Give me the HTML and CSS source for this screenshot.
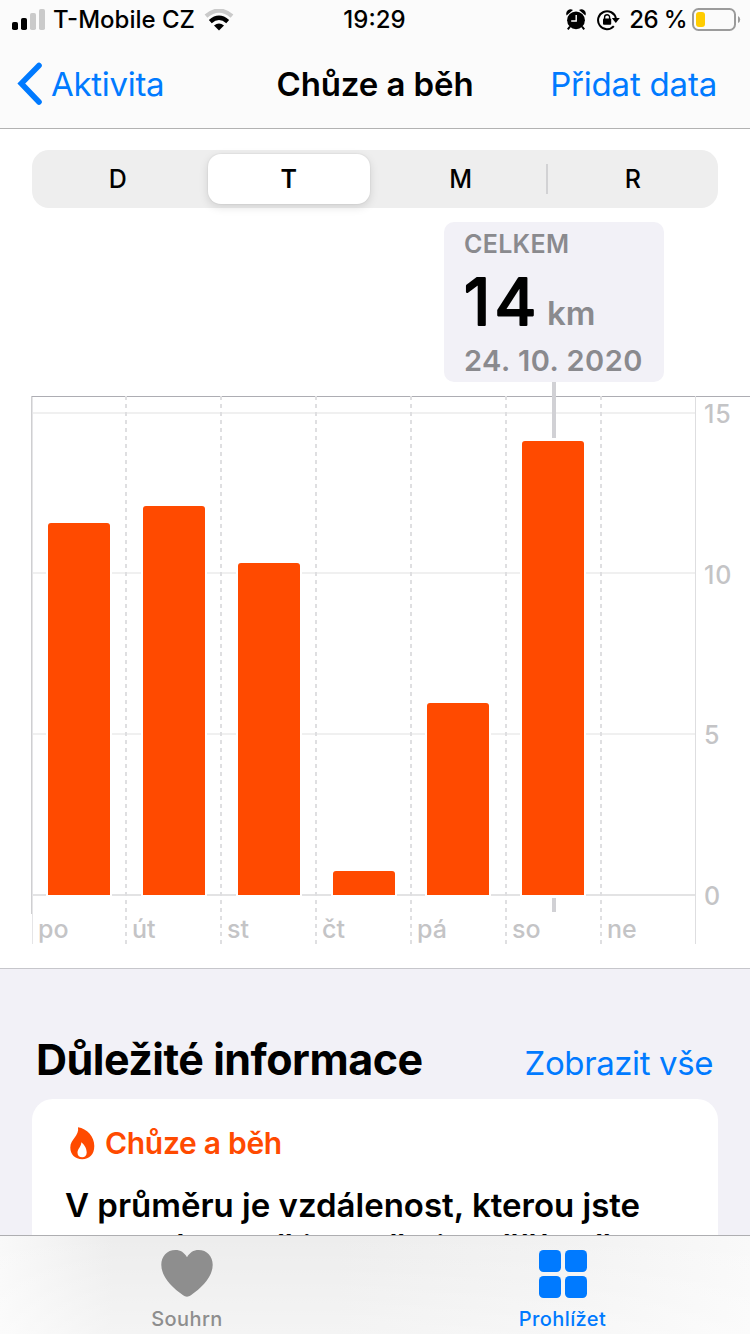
FILE: index.html
```
<!DOCTYPE html>
<html lang="cs">
<head>
    <meta charset="UTF-8">
    <meta name="viewport" content="width=device-width, initial-scale=1.0">
    <title>Chůze a běh</title>
    <link rel="stylesheet" href="styles.css">
</head>
<body>
    <div class="status-bar">
        <div class="status-left">
            <svg width="34" height="22" viewBox="0 0 34 22">
                <rect x="0" y="13" width="6" height="8" rx="1.8"/>
                <rect x="9" y="9" width="6" height="12" rx="1.8"/>
                <rect x="18" y="4" width="6" height="17" rx="1.8" fill="#cacaca"/>
                <rect x="27" y="0" width="6" height="21" rx="1.8" fill="#cacaca"/>
            </svg>
            <span class="carrier">T-Mobile CZ</span>
            <svg class="wifi" width="30" height="22" viewBox="0 0 30 22">
                <path d="M2 7.2 Q15 -4 28 7.2" fill="none" stroke="#cacaca" stroke-width="4.2"/>
                <path d="M6.3 12.6 Q15 5 23.7 12.6" fill="none" stroke="#000" stroke-width="4.4"/>
                <path d="M10 16.6 Q15 12.4 20 16.6 L15 21.6 Z"/>
            </svg>
        </div>
        <div class="clock">19:29</div>
        <div class="status-right">
            <svg width="20" height="22" viewBox="0 0 20 22">
                <circle cx="10" cy="11.3" r="8.9"/>
                <path d="M0.6 6.4 A4.4 4.4 0 0 1 7 1 Z M19.4 6.4 A4.4 4.4 0 0 0 13 1 Z"/>
                <path d="M4 17.5 L1.8 20.4 M16 17.5 L18.2 20.4" stroke="#000" stroke-width="2"/>
                <path d="M10.2 6 V12 H5.2" fill="none" stroke="#fff" stroke-width="1.4"/>
            </svg>
            <svg class="lock" width="23" height="22" viewBox="0 0 23 22">
                <path d="M16.8 17.2 A9 9 0 1 1 18.9 9.5" fill="none" stroke="#000" stroke-width="2"/>
                <path d="M14.8 9 H22.8 L18.8 14 Z"/>
                <rect x="6" y="9.6" width="8.2" height="6.2" rx="1"/>
                <path d="M7.6 10 V8.2 A2.5 2.5 0 0 1 12.6 8.2 V10" fill="none" stroke="#000" stroke-width="1.4"/>
            </svg>
            <span class="percent">26 %</span>
            <svg class="battery" width="49" height="24" viewBox="0 0 49 24">
                <rect x="1" y="1" width="42" height="21" rx="5.5" fill="none" stroke="#9b9b9b" stroke-width="2"/>
                <rect x="4" y="4" width="9" height="15" rx="3" fill="#fc0"/>
                <path d="M46 8 Q48.2 9 48.2 11.5 Q48.2 14 46 15 Z" fill="#9b9b9b"/>
            </svg>
        </div>
    </div>

    <div class="nav-bar">
        <a class="back">
            <svg width="26" height="44" viewBox="0 0 26 44">
                <path d="M22 3.5 L4.3 21.5 L22 40" fill="none" stroke="#007aff" stroke-width="5.6" stroke-linecap="round" stroke-linejoin="miter"/>
            </svg>
            <span class="back-label">Aktivita</span>
        </a>
        <h1>Chůze a běh</h1>
        <a class="add">Přidat data</a>
    </div>

    <main>
        <section class="chart-section">
            <div class="segments">
                <div class="segment">D</div>
                <div class="segment active">T</div>
                <div class="segment">M</div>
                <div class="segment divided">R</div>
            </div>

            <div class="chart">
                <div class="plot">
                    <div class="day"><div class="bar" style="height: 372px"></div><span>po</span></div>
                    <div class="day"><div class="bar" style="height: 389px"></div><span>út</span></div>
                    <div class="day"><div class="bar" style="height: 332px"></div><span>st</span></div>
                    <div class="day"><div class="bar" style="height: 24px"></div><span>čt</span></div>
                    <div class="day"><div class="bar shifted" style="height: 192px"></div><span>pá</span></div>
                    <div class="day"><div class="bar shifted" style="height: 454px"></div><span>so</span></div>
                    <div class="day"><span>ne</span></div>
                </div>
                <div class="scale">
                    <span>15</span>
                    <span>10</span>
                    <span>5</span>
                    <span>0</span>
                </div>
                <!-- Vybraný den -->
                <div class="marker"></div>
                <div class="marker-foot"></div>
                <div class="tooltip">
                    <div class="tooltip-label">CELKEM</div>
                    <div class="tooltip-value">
                        <svg class="number-box" width="76" height="72" viewBox="0 0 76 72"><text class="big-number" x="0" y="65.5">14</text></svg>
                        <span class="unit">km</span>
                    </div>
                    <div class="tooltip-date">24. 10. 2020</div>
                </div>
            </div>
        </section>

        <section class="highlights">
            <div class="highlights-head">
                <h2>Důležité informace</h2>
                <a class="show-all">Zobrazit vše</a>
            </div>
            <div class="card">
                <div class="card-title">
                    <svg width="25" height="33" viewBox="0 0 25 33">
                        <path fill="#ff4a00" fill-rule="evenodd" d="M8 0.3 C17 1.6 24.3 9.5 24.3 19 C24.3 27.5 19.3 32.2 12.2 32.2 C5 32.2 0.3 27.4 0.3 20.5 C0.3 12.5 9.6 8.5 8 0.3 Z M11.3 15.2 C11.3 20 7.5 21.5 7.5 25.7 C7.5 28.7 9.6 30.3 12.2 30.3 C14.9 30.3 16.7 28.5 16.7 25.5 C16.7 21.4 14.4 17.5 11.3 15.2 Z"/>
                    </svg>
                    <span>Chůze a běh</span>
                </div>
                <p>V průměru je vzdálenost, kterou jste<br>tento týden ušli a uběhli, vyšší než</p>
            </div>
        </section>
    </main>

    <nav class="tab-bar">
        <a class="tab">
            <svg width="52" height="48" viewBox="0 0 52 48">
                <path fill="#8e8e8e" d="M26 7.3 C23.5 2.5 19.3 0 14.5 0 C6 0 0.3 6.3 0.3 14.8 C0.3 27 11.5 38 21.8 45 C25 47.2 27 47.2 30.2 45 C40.5 38 51.7 27 51.7 14.8 C51.7 6.3 46 0 37.5 0 C32.7 0 28.5 2.5 26 7.3 Z"/>
            </svg>
            <span class="tab-label">Souhrn</span>
        </a>
        <a class="tab selected">
            <svg width="48" height="48" viewBox="0 0 48 48" fill="#007aff">
                <rect x="0" y="0" width="22" height="22" rx="4.5"/>
                <rect x="26" y="0" width="22" height="22" rx="4.5"/>
                <rect x="0" y="26" width="22" height="22" rx="4.5"/>
                <rect x="26" y="26" width="22" height="22" rx="4.5"/>
            </svg>
            <span class="tab-label">Prohlížet</span>
        </a>
    </nav>
</body>
</html>
```
FILE: styles.css
```
* {
    box-sizing: border-box;
}

body {
    display: flex;
    flex-direction: column;
    width: 750px;
    height: 1334px;
    margin: 0;
    overflow: hidden;
    font-family: "Inter", "Liberation Sans", sans-serif;
    color: #000;
    background-color: #fff;
}

svg {
    display: block;
    flex: none;
}

h1, h2, p {
    margin: 0;
}

/* Stavový řádek */
.status-bar {
    display: grid;
    grid-template-columns: 1fr 100px 1fr;
    align-items: center;
    height: 40px;
    padding: 0 10px 1px 12px;
    font-size: 24px;
    font-weight: 450;
    white-space: nowrap;
    background-color: #fbfbfb;
}

.status-left, .status-right {
    display: flex;
    align-items: center;
}

.carrier {
    margin-left: 7px;
}

.wifi {
    margin-left: 9px;
}

.clock {
    padding-right: 3px;
    text-align: center;
}

.status-right {
    justify-content: flex-end;
}

.lock {
    margin-left: 11px;
}

.percent {
    margin-left: 9px;
    letter-spacing: -0.6px;
}

.battery {
    margin: 1px -1px 0 5px;
}

/* Navigace */
.nav-bar {
    display: grid;
    grid-template-columns: 1fr auto 1fr;
    align-items: center;
    height: 89px;
    padding: 0 17px;
    font-size: 33px;
    color: #007aff;
    background-color: #fbfbfb;
    border-bottom: 1px solid #b2b2b2;
}

.back {
    display: flex;
    align-items: center;
    gap: 8px;
}

.back-label {
    letter-spacing: -0.3px;
}

h1 {
    font-size: 33px;
    font-weight: 600;
    letter-spacing: -0.1px;
    color: #000;
}

.add {
    padding-right: 16px;
    text-align: right;
    letter-spacing: -0.2px;
}

main {
    flex: 1;
    min-height: 0;
    overflow: hidden;
}

/* Přepínač období */
.chart-section {
    height: 840px;
    padding-top: 21px;
    border-bottom: 1px solid #c6c6cb;
}

.segments {
    display: grid;
    grid-template-columns: repeat(4, 1fr);
    height: 58px;
    margin: 0 32px;
    background-color: #eee;
    border-radius: 17px;
}

.segment {
    display: flex;
    align-items: center;
    justify-content: center;
    font-size: 25px;
    font-weight: 450;
}

.segment.active {
    margin: 4px 5px 4px 4px;
    font-weight: 600;
    background-color: #fff;
    border-radius: 13px;
    box-shadow: 0 3px 10px rgba(0, 0, 0, 0.13), 0 0 1px 1px rgba(0, 0, 0, 0.03);
}

.segment.divided {
    margin-left: -1px;
    padding-left: 2px;
    background: linear-gradient(#d2d2d4, #d2d2d4) no-repeat 0 14px / 2px 30px;
}

/* Graf */
.chart {
    position: relative;
    display: flex;
    height: 548px;
    margin: 188px 0 0 30px;
}

.plot {
    display: grid;
    grid-template-columns: repeat(7, 95px);
    width: 666px;
    border-right: 1px solid #dedee0;
    background:
        linear-gradient(#adadb3, #adadb3) no-repeat 2px 0 / 664px 1px,
        linear-gradient(#cfcfd1, #cfcfd1) no-repeat 1px 0 / 1px 518px,
        linear-gradient(#e5e5e7, #e5e5e7) no-repeat 2px 0 / 1px 548px,
        linear-gradient(#f0f0f0, #f0f0f0) no-repeat 2px 16px / 663px 2px,
        linear-gradient(#f0f0f0, #f0f0f0) no-repeat 2px 176px / 663px 2px,
        linear-gradient(#f0f0f0, #f0f0f0) no-repeat 2px 337px / 663px 2px,
        linear-gradient(#e3e3e4, #e3e3e4) no-repeat 2px 498px / 663px 2px;
}

.day {
    display: flex;
    flex-direction: column;
    justify-content: flex-end;
    font-size: 25px;
    font-weight: 500;
    color: #c4c4c6;
}

.day + .day {
    background: repeating-linear-gradient(#dfdfe1 0 4px, transparent 4px 8px) no-repeat 0 0 / 2px 100%;
}

.day span {
    height: 49px;
    padding-left: 7px;
    line-height: 69px;
}

.day:first-child span {
    padding-left: 8px;
}

.bar {
    width: 61.4px;
    margin-left: 18.3px;
    background-color: #ff4a00;
    border-radius: 3px 3px 0 0;
    box-shadow: 0 0 0 2px #fff;
}

.bar.shifted {
    margin-left: 17.3px;
}

.scale {
    display: flex;
    flex: 1;
    flex-direction: column;
    padding-left: 8px;
    border-top: 1px solid #adadb3;
    font-size: 25px;
    font-weight: 450;
    line-height: 34px;
    letter-spacing: 0.8px;
    color: #c4c4c6;
}

.scale span {
    flex: none;
    height: 160.6px;
}

.scale span:last-child {
    height: 40px;
}

/* Bublina s hodnotou vybraného dne */
.marker, .marker-foot {
    position: absolute;
    left: 522px;
    width: 4px;
    background-color: #d1d1d5;
}

.marker {
    top: -14px;
    height: 56px;
}

.marker-foot {
    top: 502px;
    height: 14px;
}

.tooltip {
    position: absolute;
    top: -174px;
    left: 414px;
    width: 220px;
    height: 160px;
    padding: 7px 20px 0;
    color: #8a8a8e;
    white-space: nowrap;
    background-color: #f2f1f7;
    border-radius: 10px;
}

.tooltip-label {
    font-size: 25px;
    font-weight: 600;
    line-height: 30px;
    letter-spacing: 0.3px;
}

.tooltip-value {
    display: flex;
    align-items: flex-end;
    gap: 7px;
    height: 72px;
}

.number-box {
    overflow: visible;
}

.big-number {
    font-size: 65px;
    font-weight: 400;
    letter-spacing: 4px;
    fill: #000;
    stroke: #000;
    stroke-width: 2.2px;
    stroke-linejoin: round;
}

.unit {
    font-size: 33px;
    font-weight: 600;
    line-height: 36px;
}

.tooltip-date {
    font-size: 29px;
    font-weight: 600;
    line-height: 59px;
    letter-spacing: 0.5px;
}

/* Důležité informace */
.highlights {
    height: 400px;
    padding: 64px 32px 0;
    background-color: #f2f1f7;
}

.highlights-head {
    display: flex;
    align-items: baseline;
    justify-content: space-between;
    height: 66px;
    padding: 0 5px 0 4px;
    white-space: nowrap;
}

h2 {
    font-size: 43px;
    font-weight: 700;
    letter-spacing: -0.5px;
}

.show-all {
    font-size: 33px;
    letter-spacing: -0.4px;
    color: #007aff;
}

.card {
    height: 300px;
    padding: 24px 33px;
    background-color: #fff;
    border-radius: 21px;
}

.card-title {
    display: flex;
    align-items: center;
    gap: 10px;
    height: 40px;
    padding-left: 5px;
    font-size: 30px;
    font-weight: 600;
    letter-spacing: -0.3px;
    color: #ff4a00;
}

.card p {
    margin-top: 21px;
    font-size: 33px;
    font-weight: 600;
    line-height: 42px;
    white-space: nowrap;
}

/* Spodní lišta */
.tab-bar {
    display: grid;
    grid-template-columns: 1fr 1fr;
    height: 99px;
    font-size: 20px;
    font-weight: 450;
    background: linear-gradient(to bottom, rgba(255, 255, 255, 0) 0, rgba(255, 255, 255, 0.4) 100%), linear-gradient(to right, #f9f9f9 0, #ededed 15%, #ededed 45%, #f2f2f2 75%, #f9f9f9 100%);
    border-top: 1px solid #aeaeb1;
}

.tab {
    display: flex;
    flex-direction: column;
    align-items: center;
    gap: 8px;
    padding-top: 14px;
    line-height: 26px;
    color: #8e8e8e;
}

.tab:first-child {
    padding-right: 1px;
}

.tab-label {
    letter-spacing: 0.4px;
}

.tab.selected {
    color: #007aff;
}
```
